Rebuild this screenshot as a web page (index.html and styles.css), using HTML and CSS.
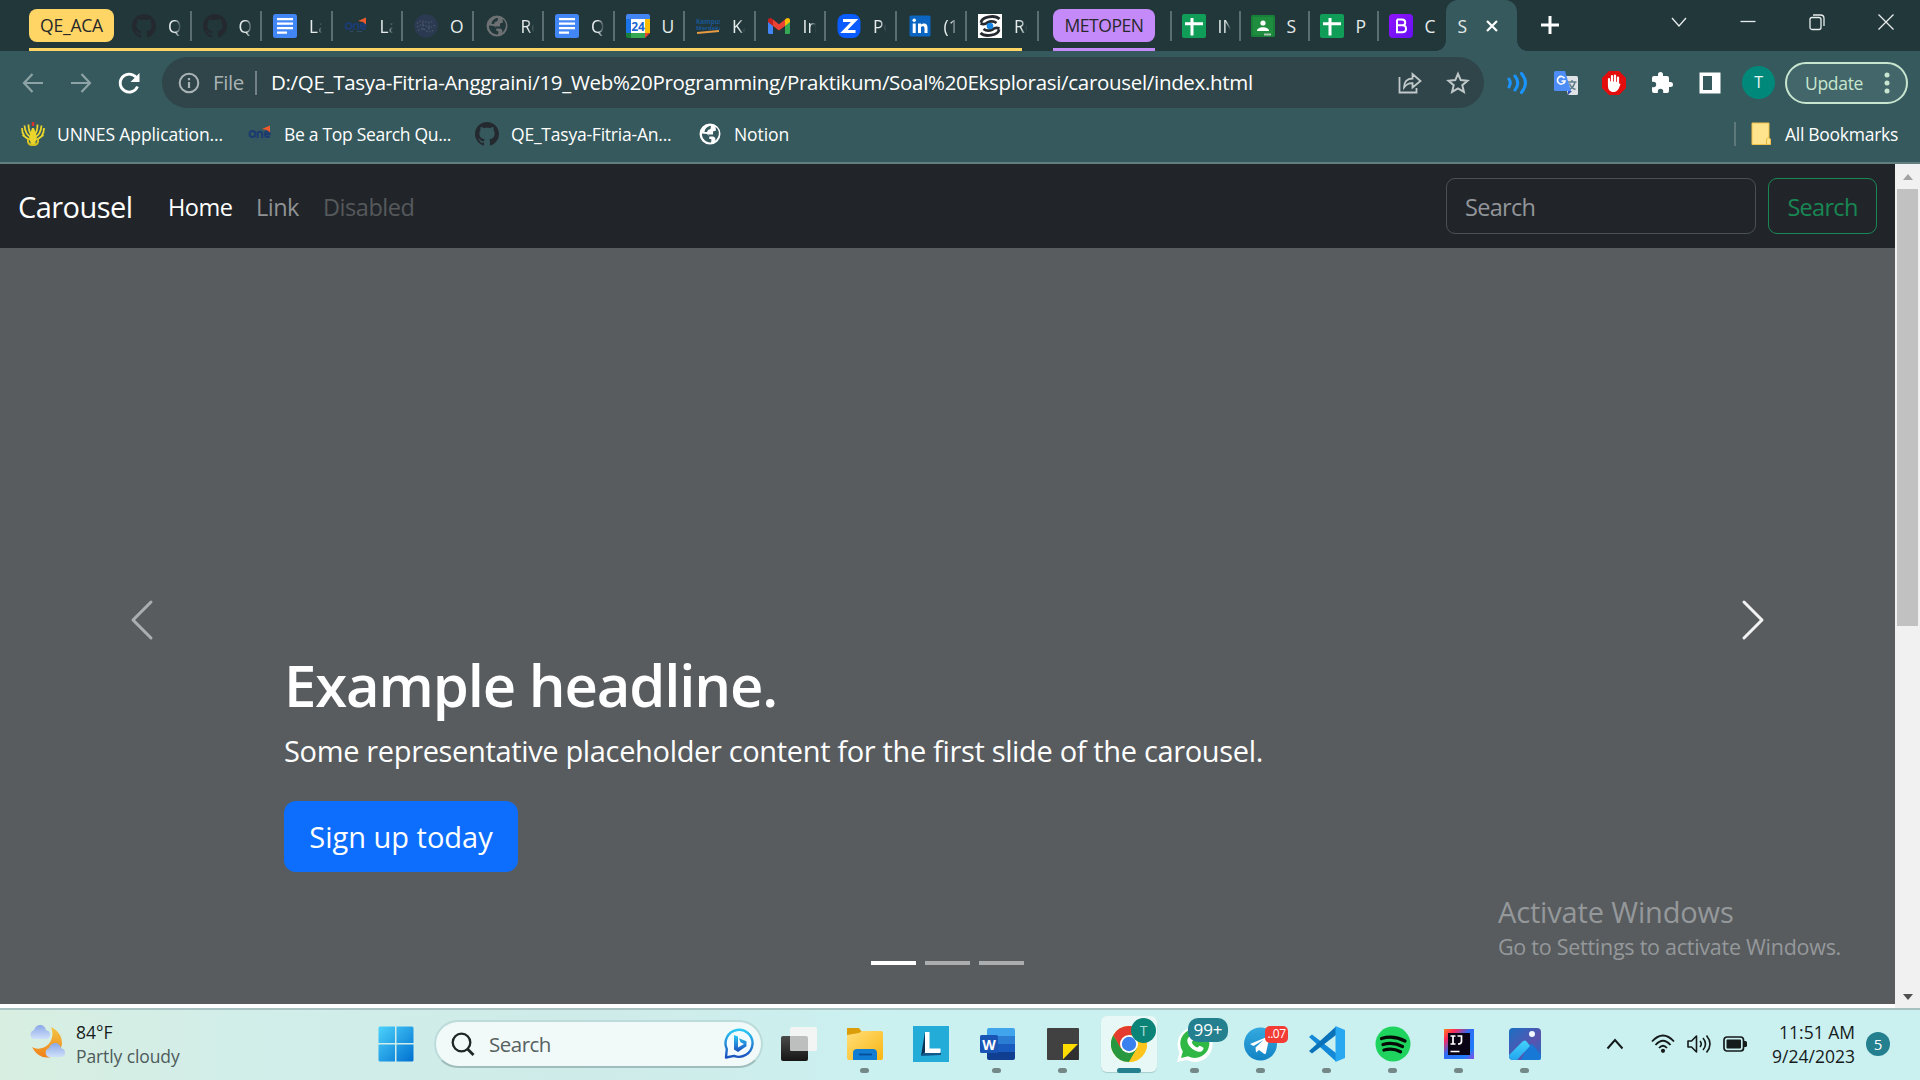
FILE: index.html
```html
<!DOCTYPE html>
<html lang="en">
<head>
<meta charset="utf-8">
<title>Carousel</title>
<link rel="stylesheet" href="styles.css">
</head>
<body>
<svg class="defs" width="0" height="0" aria-hidden="true">
  <defs>
    <linearGradient id="g-win" x1="0" y1="0" x2="1" y2="1"><stop offset="0" stop-color="#4cd2fb"/><stop offset="1" stop-color="#0070d0"/></linearGradient>
    <linearGradient id="g-moon" x1="0" y1="0" x2="0" y2="1"><stop offset="0" stop-color="#f2c744"/><stop offset="1" stop-color="#f08019"/></linearGradient>
    <linearGradient id="g-cloud" x1="0" y1="0" x2="0" y2="1"><stop offset="0" stop-color="#8aa8e6"/><stop offset="1" stop-color="#cfe0fa"/></linearGradient>
    <linearGradient id="g-folder" x1="0" y1="0" x2="1" y2="1"><stop offset="0" stop-color="#ffdf7a"/><stop offset="1" stop-color="#f9b511"/></linearGradient>
    <linearGradient id="g-bing" x1="0" y1="0" x2="0" y2="1"><stop offset="0" stop-color="#2cc9f4"/><stop offset="1" stop-color="#1b4fc0"/></linearGradient>
    <linearGradient id="g-boot" x1="0" y1="0" x2="1" y2="1"><stop offset="0" stop-color="#9013fe"/><stop offset="1" stop-color="#6610f2"/></linearGradient>
    <linearGradient id="g-tg" x1="0" y1="0" x2="0" y2="1"><stop offset="0" stop-color="#34aadf"/><stop offset="1" stop-color="#1283c4"/></linearGradient>
    <linearGradient id="g-ij" x1="0" y1="0" x2="1" y2="1"><stop offset="0" stop-color="#fc801d"/><stop offset=".2" stop-color="#fe2857"/><stop offset=".45" stop-color="#2f6cf5"/><stop offset=".8" stop-color="#1f7cf7"/><stop offset="1" stop-color="#8a4be8"/></linearGradient>
    <linearGradient id="g-photo" x1="0" y1="0" x2="1" y2="1"><stop offset="0" stop-color="#1a6fc4"/><stop offset=".6" stop-color="#5a53ad"/><stop offset="1" stop-color="#1c6fc9"/></linearGradient>
    <linearGradient id="g-hill" x1="0" y1="0" x2="0" y2="1"><stop offset="0" stop-color="#43d3fb"/><stop offset="1" stop-color="#23a4ee"/></linearGradient>
    <linearGradient id="g-dark" x1="0" y1="0" x2="0" y2="1"><stop offset="0" stop-color="#4a4a4a"/><stop offset="1" stop-color="#161616"/></linearGradient>
    <symbol id="i-github" viewBox="0 0 16 16"><path d="M8 0C3.58 0 0 3.58 0 8c0 3.54 2.29 6.53 5.47 7.59.4.07.55-.17.55-.38 0-.19-.01-.82-.01-1.49-2.01.37-2.53-.49-2.69-.94-.09-.23-.48-.94-.82-1.13-.28-.15-.68-.52-.01-.53.63-.01 1.08.58 1.23.82.72 1.21 1.87.87 2.33.66.07-.52.28-.87.51-1.07-1.78-.2-3.64-.89-3.64-3.95 0-.87.31-1.59.82-2.15-.08-.2-.36-1.02.08-2.12 0 0 .67-.21 2.2.82.64-.18 1.32-.27 2-.27s1.36.09 2 .27c1.53-1.04 2.2-.82 2.2-.82.44 1.1.16 1.92.08 2.12.51.56.82 1.27.82 2.15 0 3.07-1.87 3.75-3.65 3.95.29.25.54.73.54 1.48 0 1.07-.01 1.93-.01 2.2 0 .21.15.46.55.38A8.01 8.01 0 0 0 16 8c0-4.42-3.58-8-8-8z" fill="#24292f"/></symbol>
    <symbol id="i-docs" viewBox="0 0 24 24"><rect width="24" height="24" rx="2.5" fill="#4285f4"/><path d="M4 5.2h16M4 9.7h16M4 14.2h16M4 18.7h10" stroke="#fff" stroke-width="2.2"/></symbol>
    <symbol id="i-one" viewBox="0 0 24 24"><g fill="none" stroke="#1c3b70" stroke-width="2"><circle cx="4.500" cy="12" r="3"/><path d="M9.600 16v-6.300M9.600 12c0-3 4.600-3 4.600 0v4M17 12.200h4.600c0-3.600-4.800-3.600-4.800 0 0 3.400 3.400 3.200 4.800 2.200"/></g><path d="M14 7l8-3.500v7l-3-2.500z" fill="#f05a2a"/><path d="M6 17.500h3M13 17.500h5" stroke="#35516f" stroke-width=".8"/></symbol>
    <symbol id="i-dotted" viewBox="0 0 24 24"><circle cx="12" cy="12" r="11.800" fill="#2b3a50"/><path d="M3 9.500q4-4 8-2t9-1M3 13q5-4 9-1t9-1M4 16.500q5-3 8 0t8-1M9 8v9M15 8v9" fill="none" stroke="#4d576c" stroke-width="1.200" stroke-dasharray="1.400 1.600"/></symbol>
    <symbol id="i-globe" viewBox="0 0 24 24"><path fill="currentColor" d="M12 1.500a10.500 10.500 0 1 0 0 21 10.500 10.500 0 0 0 0-21zM4 11.500l5 .5 2.500 2.500-.5 2 2.500 1-.5 3C8 20.800 3.600 16.500 4 11.500zm12.500 7.500c2-2 .5-4-1.500-4.500h-3.500l-1.500-2h5V9.500l3-1-.5-3.500c3 1.800 4.500 6 2.500 10-1 2-2 3.200-3.500 4zM13 4l-.5 3-2.500 1-1 2H6.500C7 6.500 9.500 4 13 4z"/></symbol>
    <symbol id="i-cal" viewBox="0 0 24 24"><path fill="#4285f4" d="M2 0h20a2 2 0 0 1 2 2v4H0V2a2 2 0 0 1 2-2z"/><path fill="#fff" d="M5 5h14v14H5z"/><path fill="#1a73e8" d="M0 5h5v14H0z"/><path fill="#fbbc04" d="M19 5h5v14h-5z"/><path fill="#34a853" d="M5 19h14v5H5z"/><path fill="#188038" d="M0 19h5v5H2a2 2 0 0 1-2-2z"/><path fill="#ea4335" d="M19 19h5l-5 5z"/><text x="12" y="16.500" font-size="12" font-weight="700" text-anchor="middle" fill="#1967d2">24</text></symbol>
    <symbol id="i-kampus" viewBox="0 0 24 24"><g font-size="6.500" font-weight="700" fill="#1a5797"><text x="0" y="10">Kampus</text><text x="0" y="15.500" font-size="6">Merdeka</text></g><path d="M1 19l22-2" stroke="#e59a43" stroke-width="2"/></symbol>
    <symbol id="i-gmail" viewBox="0 0 24 24"><path fill="#4285f4" d="M1 7v11.500A1.500 1.500 0 0 0 2.500 20H6v-9z"/><path fill="#34a853" d="M23 7v11.500a1.500 1.500 0 0 1-1.500 1.500H18v-9z"/><path fill="#ea4335" d="M6 5.500l6 4.700 6-4.700V12l-6 4.500L6 12z"/><path fill="#c5221f" d="M1 6.500C1 4 3.700 3.500 5.200 4.800L6 5.500V12L1 8z"/><path fill="#fbbc04" d="M23 6.500c0-2.500-2.700-3-4.200-1.700l-.8.7V12l5-4z"/></symbol>
    <symbol id="i-z" viewBox="0 0 24 24"><rect x=".5" width="23" height="24" rx="8" fill="#0b5cff"/><path d="M6 6.500h11.500L7 17.500h11.500" fill="none" stroke="#fff" stroke-width="3.200"/></symbol>
    <symbol id="i-in" viewBox="0 0 24 24"><rect x="1.500" y="1.500" width="21" height="21" rx="1.500" fill="#0a66c2"/><path d="M4.700 9.500h3V19h-3zM10 9.500h3V19h-3zM11 13q1.500-3.500 5-3.500c3 0 3.500 2.300 3.500 4.500v5h-3v-4.500c0-2-1-2.500-2-2.300-1 .1-2 1-2 2.500z" fill="#fff"/><circle cx="6.200" cy="6.300" r="1.700" fill="#fff"/></symbol>
    <symbol id="i-eye" viewBox="0 0 24 24"><path fill="#fff" d="M0 0h24v24H0z"/><path d="M3 8.500C3.500 2.500 17 .5 21.500 5M2.500 9.500q4 1.500 7-1 5-2.500 9 .5M21 15.500c-.5 6-14 8-18.500 3.500M21.500 14.500q-4-1.500-7 1-5 2.500-9-.5" fill="none" stroke="#252a30" stroke-width="2.800"/><circle cx="12" cy="12" r="3.300" fill="#1684e2"/></symbol>
    <symbol id="i-sheet" viewBox="0 0 24 24"><rect width="24" height="24" rx="2" fill="#0f9d58"/><path d="M3 9.700h18M10 4v17.500" stroke="#fff" stroke-width="3"/></symbol>
    <symbol id="i-class" viewBox="0 0 24 24"><rect y="1" width="24" height="22" rx="1.500" fill="#188038"/><rect x="2" y="3" width="20" height="18" fill="#1e8e3e"/><circle cx="12" cy="9" r="2.600" fill="#fff"/><path d="M6 17c0-5 12-5 12 0z" fill="#fff"/><path d="M13 19.500h7v2h-7z" fill="#afc9b5"/></symbol>
    <symbol id="i-boot" viewBox="0 0 24 24"><rect width="24" height="24" rx="4" fill="url(#g-boot)"/><path d="M8 5.500h4.800c2.200 0 3.400 1.100 3.400 2.900 0 1.700-1.200 2.900-3 2.900H8m0 0h5.300c2.300 0 3.700 1.300 3.700 3.400 0 2.200-1.500 3.500-4 3.500H8V5.500" fill="none" stroke="#fff" stroke-width="2"/></symbol>
    <symbol id="i-cloud" viewBox="0 0 22 14"><path d="M5 14a4.500 4.500 0 0 1 0-8.700C6 1.500 9 0 11 0c3 0 5.500 2 6 5.300A4.400 4.400 0 0 1 17.500 14z" fill="url(#g-cloud)"/></symbol>
  </defs>
</svg>

<div class="screen">
  <header class="tabstrip">
    <div class="group group-qe"><span class="pill pill-yellow">QE_ACA</span>
      <div class="tabs">
        <div class="tab"><svg class="fav"><use href="#i-github"/></svg><span>Q</span></div>
        <div class="tab"><svg class="fav"><use href="#i-github"/></svg><span>Q</span></div>
        <div class="tab"><svg class="fav"><use href="#i-docs"/></svg><span>La</span></div>
        <div class="tab"><svg class="fav"><use href="#i-one"/></svg><span>La</span></div>
        <div class="tab"><svg class="fav"><use href="#i-dotted"/></svg><span>O</span></div>
        <div class="tab"><svg class="fav globe-gray"><use href="#i-globe"/></svg><span>Re</span></div>
        <div class="tab"><svg class="fav"><use href="#i-docs"/></svg><span>Q</span></div>
        <div class="tab"><svg class="fav"><use href="#i-cal"/></svg><span>U</span></div>
        <div class="tab"><svg class="fav"><use href="#i-kampus"/></svg><span>Ka</span></div>
        <div class="tab"><svg class="fav"><use href="#i-gmail"/></svg><span>In</span></div>
        <div class="tab"><svg class="fav"><use href="#i-z"/></svg><span>Po</span></div>
        <div class="tab"><svg class="fav"><use href="#i-in"/></svg><span>(1</span></div>
        <div class="tab"><svg class="fav"><use href="#i-eye"/></svg><span>Re</span></div>
      </div>
    </div>
    <div class="group group-met"><span class="pill pill-purple">METOPEN</span></div>
    <div class="tabs tabs-loose">
      <div class="tab"><svg class="fav"><use href="#i-sheet"/></svg><span>IN</span></div>
      <div class="tab"><svg class="fav"><use href="#i-class"/></svg><span>S</span></div>
      <div class="tab"><svg class="fav"><use href="#i-sheet"/></svg><span>P</span></div>
      <div class="tab"><svg class="fav"><use href="#i-boot"/></svg><span>C</span></div>
    </div>
    <div class="tab-active"><span>S</span><svg width="12" height="12" viewBox="0 0 12 12"><path d="M1 1l10 10M11 1L1 11" stroke="#fff" stroke-width="2.200"/></svg></div>
    <svg class="newtab" width="20" height="20" viewBox="0 0 20 20"><path d="M10 1v18M1 10h18" stroke="#fff" stroke-width="3"/></svg>
    <div class="wincontrols">
      <svg width="18" height="18" viewBox="0 0 18 18"><path d="M2 5l7 8 7-8"/></svg>
      <svg width="18" height="18" viewBox="0 0 18 18"><path d="M1.500 8.500h15"/></svg>
      <svg width="18" height="18" viewBox="0 0 18 18"><rect x="2" y="4.500" width="11" height="12" rx="2"/><path d="M5 2h7.500q3.500 0 3.500 3.500V13"/></svg>
      <svg width="18" height="18" viewBox="0 0 18 18"><path d="M1.500 1.500l15 15M16.500 1.500l-15 15"/></svg>
    </div>
  </header>

  <div class="toolbar">
    <div class="navbtns">
      <svg width="24" height="24" viewBox="0 0 24 24"><path d="M22 12H3M11.500 3L3 12l8.500 9" stroke="#8ea3a5"/></svg>
      <svg width="24" height="24" viewBox="0 0 24 24"><path d="M2 12h19M12.500 3l8.500 9-8.500 9" stroke="#8ea3a5"/></svg>
      <svg width="24" height="24" viewBox="0 0 24 24"><path d="M20.500 15.500A9 9 0 1 1 19 6.200" stroke="#fff" stroke-width="2.800"/><path d="M22.500 2v9h-9z" fill="#fff"/></svg>
    </div>
    <div class="omnibox">
      <svg width="22" height="22" viewBox="0 0 22 22"><circle cx="11" cy="11" r="9.300" fill="none" stroke="#a9b2b4" stroke-width="2"/><path d="M11 10v6M11 6v2.300" stroke="#a9b2b4" stroke-width="2.200"/></svg>
      <span class="scheme">File</span><i class="bar"></i>
      <span class="url">D:/QE_Tasya-Fitria-Anggraini/19_Web%20Programming/Praktikum/Soal%20Eksplorasi/carousel/index.html</span>
      <svg class="share" width="24" height="24" viewBox="0 0 24 24"><path d="M1.500 6v15.500h17V17M6 16.500C6 11 9 7.500 14.500 7.500V3l8 7-8 6.500v-4.300C11 12 8.500 13 6 16.500z" fill="none" stroke="#c1c8c9" stroke-width="1.800"/></svg>
      <svg class="star" width="24" height="24" viewBox="0 0 24 24"><path d="M12 2.800l2.700 6.300 6.800.6-5.200 4.500 1.600 6.700-5.900-3.600-5.900 3.600 1.600-6.700-5.200-4.500 6.800-.6z" fill="none" stroke="#c1c8c9" stroke-width="2"/></svg>
    </div>
    <div class="extensions">
      <svg width="24" height="24" viewBox="0 0 24 24"><path d="M3 8q2.500 4 0 8M9 5q5.500 7 0 14M15.500 2.500q8 9.500 0 19" fill="none" stroke="#1a94ff" stroke-width="3" stroke-linecap="round"/></svg>
      <svg width="24" height="24" viewBox="0 0 24 24"><path d="M9 5h13.500A1.500 1.500 0 0 1 24 6.500v16a1.500 1.500 0 0 1-1.500 1.500H14z" fill="#e0e3e6"/><path d="M13.500 11h9M18 9v2M21 11c-1 4-3 6-5.500 7.500M15.500 12.500c1 3 3 5 6 6" stroke="#607d8b" fill="none" stroke-width="1.500"/><path d="M14 20h4l-4 4z" fill="#3451b5"/><path d="M1.500 0H11l6 20H1.500A1.500 1.500 0 0 1 0 18.500v-17A1.500 1.500 0 0 1 1.500 0z" fill="#4e8df5"/><path d="M10.500 7.200A3.800 3.800 0 1 0 11 10H7.500" fill="none" stroke="#fff" stroke-width="1.600"/></svg>
      <svg width="24" height="24" viewBox="0 0 24 24"><path d="M7 0h10l7 7v10l-7 7H7l-7-7V7z" fill="#e40d0d"/><path d="M7 8V14M10 5V13M13 4.500V13M16 6.500V14" stroke="#fff" stroke-width="2.200" stroke-linecap="round"/><path d="M6 10v5c0 3.500 2 6 5.500 6 3 0 4.500-2 5.500-4l1.500-4c-.5-1-1.300-.5-2.300 1V11z" fill="#fff"/></svg>
      <svg width="24" height="24" viewBox="0 0 24 24"><path d="M20.500 11H19V7a2 2 0 0 0-2-2h-4V3.500a2.500 2.500 0 0 0-5 0V5H4a2 2 0 0 0-2 2v3.800h1.500a2.700 2.700 0 0 1 0 5.400H2V20a2 2 0 0 0 2 2h3.800v-1.500a2.700 2.700 0 0 1 5.400 0V22H17a2 2 0 0 0 2-2v-4h1.500a2.500 2.500 0 0 0 0-5z" fill="#fff"/></svg>
      <svg width="24" height="24" viewBox="0 0 24 24"><path d="M1.500 1.500h21v21h-21zM5 5v14h9V5z" fill="#fff" fill-rule="evenodd"/></svg>
    </div>
    <span class="avatar">T</span>
    <div class="update"><span>Update</span><svg width="6" height="22" viewBox="0 0 6 22" fill="#c8e6cf"><circle cx="3" cy="3" r="2.500"/><circle cx="3" cy="11" r="2.500"/><circle cx="3" cy="19" r="2.500"/></svg></div>
  </div>

  <div class="bookmarks">
    <svg class="bm-icon" viewBox="0 0 24 24"><g fill="none" stroke="#e9d52c" stroke-width="1.800"><path d="M10.500 18C5 17 1 13 1 6M10.500 15.500C7 14 4 10 3.500 3.500M10.500 13C8 10 7.500 6 7.500 2.500M13.500 18c5.500-1 9.500-5 9.500-12M13.500 15.500c3.500-1.500 6.500-5.500 7-12M13.500 13c2.500-3 3-7 3-10.500M1.500 13l5 3.500M22.500 13l-5 3.500"/></g><path d="M8 15l3-9h2l3 9-2 7h-4z" fill="#e9d52c"/><path d="M12 0v4" stroke="#d7322b" stroke-width="2.500"/><path d="M7 17q-1 6 5 6t5-6" fill="none" stroke="#d8c21f" stroke-width="2"/></svg>
    <span class="bm b1">UNNES Application...</span>
    <svg class="bm-icon"><use href="#i-one"/></svg><span class="bm b2">Be a Top Search Qu...</span>
    <svg class="bm-icon"><use href="#i-github"/></svg><span class="bm b3">QE_Tasya-Fitria-An...</span>
    <svg class="bm-icon globe-white"><use href="#i-globe"/></svg><span class="bm b4">Notion</span>
    <i class="bm-sep"></i>
    <svg class="bm-folder" width="20" height="24" viewBox="0 0 20 24"><path d="M1 1h17v15l1.500 1v5.500H1z" fill="#ffe38d" stroke="#f0c248"/><path d="M15.500 22v-5l2.500-1.500" fill="none" stroke="#e6b93e"/></svg>
    <span class="bm b5">All Bookmarks</span>
  </div>

  <div class="viewport">
    <main class="page">
      <nav class="navbar">
        <span class="brand">Carousel</span>
        <span class="link link-home">Home</span><span class="link link-link">Link</span><span class="link link-disabled">Disabled</span>
        <div class="search-input">Search</div>
        <div class="search-btn">Search</div>
      </nav>
      <section class="carousel">
        <svg class="prev" width="48" height="48" viewBox="0 0 16 16" fill="#fff"><path d="M11.354 1.646a.5.5 0 0 1 0 .708L5.707 8l5.647 5.646a.5.5 0 0 1-.708.708l-6-6a.5.5 0 0 1 0-.708l6-6a.5.5 0 0 1 .708 0z"/></svg>
        <div class="caption">
          <h1>Example headline.</h1>
          <p>Some representative placeholder content for the first slide of the carousel.</p>
          <a class="signup">Sign up today</a>
        </div>
        <svg class="next" width="48" height="48" viewBox="0 0 16 16" fill="#fff"><path d="M4.646 1.646a.5.5 0 0 1 .708 0l6 6a.5.5 0 0 1 0 .708l-6 6a.5.5 0 0 1-.708-.708L10.293 8 4.646 2.354a.5.5 0 0 1 0-.708z"/></svg>
        <div class="dots"><i class="on"></i><i></i><i></i></div>
        <div class="activate"><span class="a1">Activate Windows</span><span class="a2">Go to Settings to activate Windows.</span></div>
      </section>
    </main>
    <div class="scrollbar"><i class="up"></i><i class="thumb"></i><i class="down"></i></div>
  </div>

  <footer class="taskbar">
    <svg class="weather" width="38" height="36" viewBox="0 0 38 36"><path d="M23 3c9 4 14 14 9 23-6 10-21 11-28-3 11 6 25-5 19-20z" fill="url(#g-moon)"/><use href="#i-cloud" x="1" y="1" width="22" height="14"/><use href="#i-cloud" x="16" y="19" width="22" height="14"/></svg>
    <div class="weather-text"><span class="temp">84°F</span><span class="cond">Partly cloudy</span></div>
    <svg class="start" width="36" height="36" viewBox="0 0 36 36"><path d="M2 .5h15v16.500H.5V2A1.500 1.500 0 0 1 2 .5zM18.500.5H34A1.500 1.500 0 0 1 35.500 2v15h-17zM.5 18.500H17v17H2A1.500 1.500 0 0 1 .5 34zM18.500 18.500h17V34a1.500 1.500 0 0 1-1.500 1.500H18.500z" fill="url(#g-win)"/></svg>
    <div class="tb-search">
      <svg width="24" height="24" viewBox="0 0 24 24"><circle cx="10.500" cy="10.500" r="8.800" fill="none" stroke="#202525" stroke-width="2.300"/><path d="M16.500 17l6 6" stroke="#202525" stroke-width="2.800"/></svg>
      <span>Search</span>
      <svg class="bing" width="32" height="32" viewBox="0 0 32 32"><path d="M3 29.500l.8-8.500A13.500 13.500 0 1 1 11 27.800z" fill="#f3fbff" stroke="url(#g-bing)" stroke-width="2.400" stroke-linejoin="round"/><path d="M11 7l4 1.500v11l6-3.500-3.500-1.800-1.500-4 7.500 3v5L15 24l-4-2.500z" fill="url(#g-bing)"/></svg>
    </div>
    <div class="apps">
      <div class="app"><svg viewBox="0 0 36 36"><rect y="10" width="27" height="25" rx="2" fill="url(#g-dark)"/><rect x="9" y="1" width="27" height="24" rx="2" fill="#f3f4f4"/><path d="M9 10h16a2 2 0 0 1 2 2v13H11a2 2 0 0 1-2-2z" fill="#bdbfbf"/></svg></div>
      <div class="app run"><svg viewBox="0 0 36 36"><path d="M0 2h12l3 4v6H0z" fill="#dc9d0a"/><path d="M0 9l12-2 3-2h19a2 2 0 0 1 2 2v25a2 2 0 0 1-2 2H2a2 2 0 0 1-2-2z" fill="url(#g-folder)"/><path d="M6 34v-7a4 4 0 0 1 4-4h16a4 4 0 0 1 4 4v7z" fill="#117dd2"/><path d="M12 28.500h13" stroke="#064f98" stroke-width="1.800"/></svg></div>
      <div class="app"><svg viewBox="0 0 36 36"><path d="M0 0h36v36H0z" fill="#24acd8"/><path d="M12 6v20l-4 4z" fill="#0b3156"/><path d="M8 30l4-4h16v3z" fill="#10598a"/><path d="M12 6h4.500v16.500h11V27H12z" fill="#fff"/></svg></div>
      <div class="app run"><svg viewBox="0 0 36 36"><path d="M10 2h24a2 2 0 0 1 2 2v6H8V4a2 2 0 0 1 2-2z" fill="#41a5ee"/><path d="M8 10h28v8H8z" fill="#2b7cd3"/><path d="M8 18h28v8H8z" fill="#185abd"/><path d="M8 26h28v6a2 2 0 0 1-2 2H10a2 2 0 0 1-2-2z" fill="#103f91"/><rect x="1" y="9" width="18" height="18" rx="1.500" fill="#1955b5"/><text x="10" y="23.500" font-size="14" font-weight="700" text-anchor="middle" fill="#fff">W</text></svg></div>
      <div class="app run"><svg viewBox="0 0 36 36"><rect x="2" y="2" width="32" height="32" rx="1" fill="#414141"/><path d="M18 18h15L18 33.500z" fill="#ffdc00"/><path d="M18 33.500L33.500 18v16H18z" fill="#303030"/></svg></div>
      <div class="app run active"><svg viewBox="0 0 36 36"><circle cx="18" cy="18" r="18" fill="#fdd130"/><path d="M2.400 9A18 18 0 0 1 33.600 9H18z" fill="#e33b2e"/><path d="M2.400 9A18 18 0 0 0 18 36l8-13.500-8-4.500-8 4z" fill="#27983f"/><path d="M2.400 9L10 22.500l8-13.500z" fill="#e33b2e"/><path d="M18 36a18 18 0 0 0 15.600-27H18l8 13.500z" fill="#fdc51e"/><circle cx="18" cy="18" r="9" fill="#fff"/><circle cx="18" cy="18" r="7.200" fill="#3b80ef"/></svg><b class="badge badge-t">T</b></div>
      <div class="app run"><svg viewBox="0 0 36 36"><path d="M0 36l2.500-9.500A17.500 17.500 0 1 1 10 34z" fill="#fff"/><path d="M4 32l1.800-6.500A14.500 14.500 0 1 1 11 30.200z" fill="#2fb944"/><path d="M12 11c1.500-1.500 2.500-1 3 .2l1 2.700c.3 1-1.300 1.700-1.300 2.400 1 2.500 3 4.300 5.600 5.300.8 0 1.700-2 2.500-1.900l3 1.500c1 .6.800 1 .5 2-.6 2-3 3-5 2.500-6-1.300-11-7-11-11 0-1.500.6-2.700 1.700-3.700z" fill="#fff"/></svg><b class="badge badge-wa">99+</b></div>
      <div class="app run"><svg viewBox="0 0 36 36"><circle cx="17.500" cy="18" r="16.500" fill="url(#g-tg)"/><path d="M7 18l18-7.500c1-.3 1.500.2 1.300 1.200L23 27c-.3 1-1 1.300-2 .7l-5-3.700-3 2.500-.5-5 8-7.500-10 6z" fill="#fff"/></svg><b class="badge badge-tg">..07</b></div>
      <div class="app run"><svg viewBox="0 0 36 36"><path d="M0 11l3-2.500L27 27v8.500z" fill="#1389d8"/><path d="M0 25l3 2.500L27 9V.5z" fill="#0a72b9"/><path d="M26.500 0L36 4v28l-9.500 4z" fill="#28a8f1"/></svg></div>
      <div class="app run"><svg viewBox="0 0 36 36"><circle cx="18" cy="18" r="17.500" fill="#1ed45e"/><path d="M6.500 12.500q12-3.500 23.500 2.500M8 18.500q10-3 19.500 2M9 24q9-2.300 16.500 1.800" fill="none" stroke="#050c07" stroke-width="3.300" stroke-linecap="round"/></svg></div>
      <div class="app run"><svg viewBox="0 0 36 36"><path d="M3 3h30v30H3z" fill="url(#g-ij)"/><path d="M7 7h22v22H7z" fill="#090314"/><path d="M9.500 10h5M12 10v8M9.500 18h5M16.500 10h4v5.500q0 2.500-3.500 2.500M9.500 25.500h9" fill="none" stroke="#fff" stroke-width="1.700"/></svg></div>
      <div class="app run"><svg viewBox="0 0 36 36"><rect x="2" y="2" width="32" height="32" rx="4" fill="url(#g-photo)"/><circle cx="25" cy="8" r="3" fill="#f4f7ff"/><path d="M14 34l7-14q3-4 6 0l7 10v2a2 2 0 0 1-2 2z" fill="#1878d6"/><path d="M2 29l13-13q3-3 5 0l3 4-13 14H6a4 4 0 0 1-4-4z" fill="url(#g-hill)"/></svg></div>
    </div>
    <div class="tray">
      <svg width="18" height="12" viewBox="0 0 18 12"><path d="M1.500 10.500L9 2l7.500 8.500" fill="none" stroke="#151a1a" stroke-width="2"/></svg>
      <svg class="wifi" width="24" height="20" viewBox="0 0 24 20"><path d="M1 7.500Q12-4.500 23 7.500M4.500 11Q12 2.500 19.500 11M8 14q4-4.500 8 0" fill="none" stroke="#151a1a" stroke-width="1.800"/><circle cx="12" cy="16.800" r="2.100" fill="#151a1a"/></svg>
      <svg class="vol" width="24" height="20" viewBox="0 0 24 20"><path d="M1 7h3.500L9.500 2v16l-5-5H1zM13 7q2.500 3 0 6M16 4q5 6 0 12M19.500 1.500q7 8.500 0 17" fill="none" stroke="#151a1a" stroke-width="1.600" stroke-linejoin="round"/></svg>
      <svg class="bat" width="24" height="16" viewBox="0 0 24 16"><rect x="1" y="1" width="19.500" height="14" rx="3" fill="none" stroke="#151a1a" stroke-width="1.700"/><rect x="3.500" y="3.500" width="14.500" height="9" rx="1" fill="#151a1a"/><path d="M21 5h1.500q1.500 0 1.500 1.500v3q0 1.500-1.500 1.500H21z" fill="#151a1a"/></svg>
      <div class="clock"><span>11:51 AM</span><span class="date">9/24/2023</span></div>
      <span class="count">5</span>
    </div>
  </footer>
</div>
</body>
</html>
```
FILE: styles.css
```css
* { box-sizing: border-box; }
html, body { margin: 0; height: 100%; overflow: hidden; }
body { font-family: "Open Sans", "Noto Sans", sans-serif; }
.defs { position: absolute; }
svg { display: block; flex: none; }
span { white-space: nowrap; }
.screen { width: 1920px; height: 1080px; display: flex; flex-direction: column; background: #36595d; }

/* tab strip */
.tabstrip { height: 51px; flex: none; display: flex; background: #21373a; color: #e5ebeb; font-size: 17.5px; }
.group { height: 51px; display: flex; padding-top: 9px; border-bottom: 3px solid; }
.group-qe { margin-left: 29px; width: 993px; border-color: #ffd666; border-radius: 3px 3px 0 0; }
.group-met { margin-left: 31px; width: 102px; border-color: #c58af9; }
.pill { height: 33px; border-radius: 8px; color: #26282b; line-height: 33px; text-align: center; flex: none; }
.pill-yellow { width: 85px; background: #ffd666; letter-spacing: -.2px; }
.pill-purple { width: 102px; background: #c58af9; letter-spacing: -.45px; }
.tabs { display: flex; margin-left: 7px; height: 30px; margin-top: 2px; flex: none; }
.tabs-loose { margin: 11px 0 0 14.5px; border-left: 2px solid #5a6d70; }
.tab { width: 70.5px; border-right: 2px solid #5a6d70; padding-left: 11px; display: flex; align-items: center; flex: none; }
.group .tab:last-child { width: 71.5px; }
.tabs-loose .tab { width: 69px; padding-left: 10px; }
.tabs-loose .tab:last-child { border: 0; }
.tab span { margin-left: 12px; width: 13px; overflow: hidden; -webkit-mask-image: linear-gradient(90deg, #000 55%, transparent); mask-image: linear-gradient(90deg, #000 55%, transparent); }
.tabs-loose .tab:nth-child(n+2) span, .tab:nth-child(5) span, .tab:nth-child(8) span { -webkit-mask-image: none; mask-image: none; }
.fav { width: 24px; height: 24px; }
.globe-gray { color: #6d7173; }
.globe-white { color: #fff; }
.tab-active { position: relative; width: 71px; height: 51px; margin-left: -2px; background: #36595d; border-radius: 12px 12px 0 0; padding-left: 12px; display: flex; align-items: center; gap: 19px; }
.tab-active::before, .tab-active::after { content: ""; position: absolute; bottom: 0; width: 10px; height: 10px; }
.tab-active::before { left: -10px; background: radial-gradient(circle at 0 0, transparent 9.5px, #36595d 10px); }
.tab-active::after { right: -10px; background: radial-gradient(circle at 100% 0, transparent 9.5px, #36595d 10px); }
.newtab { margin: 15px 0 0 23px; }
.wincontrols { margin: 13px 25px 0 auto; display: flex; gap: 51px; fill: none; stroke: #e8eded; stroke-width: 1.3; }

/* toolbar */
.toolbar { height: 63px; flex: none; display: flex; align-items: center; padding-right: 12px; }
.navbtns { margin-left: 21px; width: 141px; display: flex; gap: 24px; fill: none; stroke-width: 2.2; }
.omnibox { width: 1323px; height: 51px; border-radius: 26px; background: #2f4549; display: flex; align-items: center; padding-left: 16px; font-size: 20.5px; color: #fff; }
.scheme { margin-left: 13px; width: 30px; padding-bottom: 1px; color: #a9b2b4; letter-spacing: -.35px; }
.bar { width: 2px; height: 24px; margin: 0 14px 0 12px; background: #728185; }
.url { width: 982px; padding-bottom: 1px; letter-spacing: -.308px; }
.share { margin-left: 145px; }
.star { margin-left: 24px; }
.extensions { margin-left: 22px; display: flex; gap: 24px; }
.avatar { width: 33px; height: 33px; margin-left: 20px; border-radius: 50%; background: #00897b; color: #e5f5f2; font-size: 16px; line-height: 33px; text-align: center; }
.update { width: 123px; height: 42px; margin-left: 10px; border: 2px solid #c8e6cf; border-radius: 21px; background: #42666a; color: #c8e6cf; font-size: 17.5px; display: flex; align-items: center; padding-left: 18px; }
.update span { width: 58px; margin-right: 21px; letter-spacing: -.33px; }

/* bookmarks */
.bookmarks { height: 50px; flex: none; display: flex; align-items: center; padding: 0 21px 8px; border-bottom: 2px solid #617e80; color: #fff; font-size: 17.5px; }
.bm-icon { width: 24px; height: 24px; margin-right: 12px; }
.bm { flex: none; }
.b1 { width: 191px; letter-spacing: -.105px; }
.b2 { width: 191px; letter-spacing: -.3px; }
.b3 { width: 187px; letter-spacing: -.22px; }
.b4 { width: 60px; letter-spacing: -.1px; }
.bm-sep { width: 2px; height: 24px; margin-left: auto; background: #5d797c; }
.bm-folder { margin: 0 14px 0 15px; }
.b5 { width: 114px; letter-spacing: -.28px; }

/* page */
.viewport { height: 844px; flex: none; display: flex; background: #fff; }
.page { width: 1895px; height: 840px; }
.navbar { height: 84px; background: #212529; display: flex; align-items: center; padding: 0 18px; font-size: 23.5px; color: #fff; }
.brand { font-size: 29px; width: 150px; letter-spacing: -.55px; }
.link { padding-top: 1px; }
.link-home { width: 88px; letter-spacing: -.5px; }
.link-link { width: 67px; color: #909294; letter-spacing: -.5px; }
.link-disabled { color: #56595c; letter-spacing: -.45px; }
.search-input { margin-left: auto; width: 310px; height: 56px; border: 1px solid #495057; border-radius: 9px; line-height: 56px; padding-left: 18px; color: #92969a; letter-spacing: -.7px; }
.search-btn { margin-left: 12px; width: 109px; height: 56px; border: 1px solid #198754; border-radius: 9px; line-height: 56px; text-align: center; color: #198754; letter-spacing: -.7px; }
.carousel { position: relative; height: 756px; background: #585c5f; display: flex; align-items: center; color: #fff; }
.prev { margin: -12px 0 0 118px; opacity: .5; }
.next { margin: -12px 118px 0 auto; opacity: .92; }
.caption { align-self: flex-end; margin: 0 0 132px 118px; }
.caption h1 { margin: 0; font-size: 58px; font-weight: 600; line-height: 72px; letter-spacing: -1.15px; white-space: nowrap; }
.caption p { margin: 7px 0 28px; font-size: 29px; line-height: 45px; letter-spacing: -.343px; white-space: nowrap; }
.signup { display: block; width: 234px; height: 71px; border-radius: 12px; background: #0d6efd; font-size: 29px; line-height: 71px; text-align: center; white-space: nowrap; }
.dots { position: absolute; left: 871px; bottom: 39px; display: flex; gap: 9px; }
.dots i { width: 45px; height: 4px; background: #abadaf; }
.dots .on { background: #fff; }
.activate { position: absolute; left: 1498px; top: 644px; display: flex; flex-direction: column; color: #95989a; }
.a1 { font-size: 29px; line-height: 40px; letter-spacing: -.15px; }
.a2 { font-size: 21.5px; line-height: 30px; letter-spacing: -.265px; }
.scrollbar { width: 25px; background: #f1f1f1; display: flex; flex-direction: column; align-items: center; padding: 10px 0 8px; }
.up, .down { border: 5.5px solid transparent; }
.up { border-top: 0; border-bottom: 6px solid #a3a3a3; }
.down { border-bottom: 0; border-top: 6px solid #505050; margin-top: auto; }
.thumb { width: 21px; height: 437px; margin-top: 9px; background: #c1c1c1; }

/* taskbar */
.taskbar { height: 72px; flex: none; border-top: 2px solid #a8c1c1; display: flex; align-items: center; background: linear-gradient(90deg, #d8eee1 0, #d2eee9 240px, #cfebe9 600px, #caf1f0 900px, #caf0f0 100%); color: #161b1b; font-size: 17.5px; padding-bottom: 2px; }
.weather { margin: -4px 0 0 28px; }
.weather-text { width: 312px; padding-left: 10px; display: flex; flex-direction: column; line-height: 24px; }
.cond { color: #4d5b5a; letter-spacing: -.1px; }
.tb-search { width: 329px; height: 48px; margin-left: 20px; border: 2px solid #bcdcdb; border-bottom-color: #9fbdbc; border-radius: 24px; background: #f1faf9; display: flex; align-items: center; padding: 0 6px 0 15px; font-size: 20.5px; color: #576160; }
.tb-search span { margin-left: 14px; letter-spacing: -.5px; }
.bing { margin-left: auto; }
.apps { display: flex; margin-left: 3px; }
.app { position: relative; width: 66px; height: 70px; display: flex; align-items: center; justify-content: center; flex: none; }
.app > svg { width: 36px; height: 36px; z-index: 1; }
.app.run::after { content: ""; position: absolute; left: 28px; bottom: 6px; width: 9px; height: 5px; border-radius: 2.5px; background: #738887; }
.app.active::before { content: ""; position: absolute; left: 5px; top: 7px; width: 56px; height: 56px; border-radius: 6px; background: #e8f8f7; box-shadow: 0 1px 1px #a9cccb; }
.app.active::after { left: 21px; width: 24px; background: #24808f; }
.badge { position: absolute; z-index: 2; font-weight: 400; color: #fff; text-align: center; background: #24808f; }
.badge-t { left: 35px; top: 9px; width: 25px; height: 25px; border-radius: 50%; font-size: 14px; line-height: 25px; color: #a9dcd5; background: #0b8477; }
.badge-wa { left: 26px; top: 9px; width: 40px; height: 24px; border-radius: 10px; font-size: 17px; line-height: 23px; }
.badge-tg { left: 37px; top: 17px; width: 23px; height: 17px; border-radius: 5px; font-size: 12px; line-height: 16px; letter-spacing: -.5px; background: #f23c34; }
.tray { margin-left: auto; padding-right: 30px; display: flex; align-items: center; }
.wifi { margin-left: 27px; }
.vol { margin-left: 12px; }
.bat { margin-left: 12px; }
.clock { width: 108px; display: flex; flex-direction: column; align-items: flex-end; line-height: 24px; }
.count { width: 24px; height: 24px; margin-left: 11px; border-radius: 50%; background: #24808f; color: #fff; font-size: 15px; line-height: 24px; text-align: center; }
```
